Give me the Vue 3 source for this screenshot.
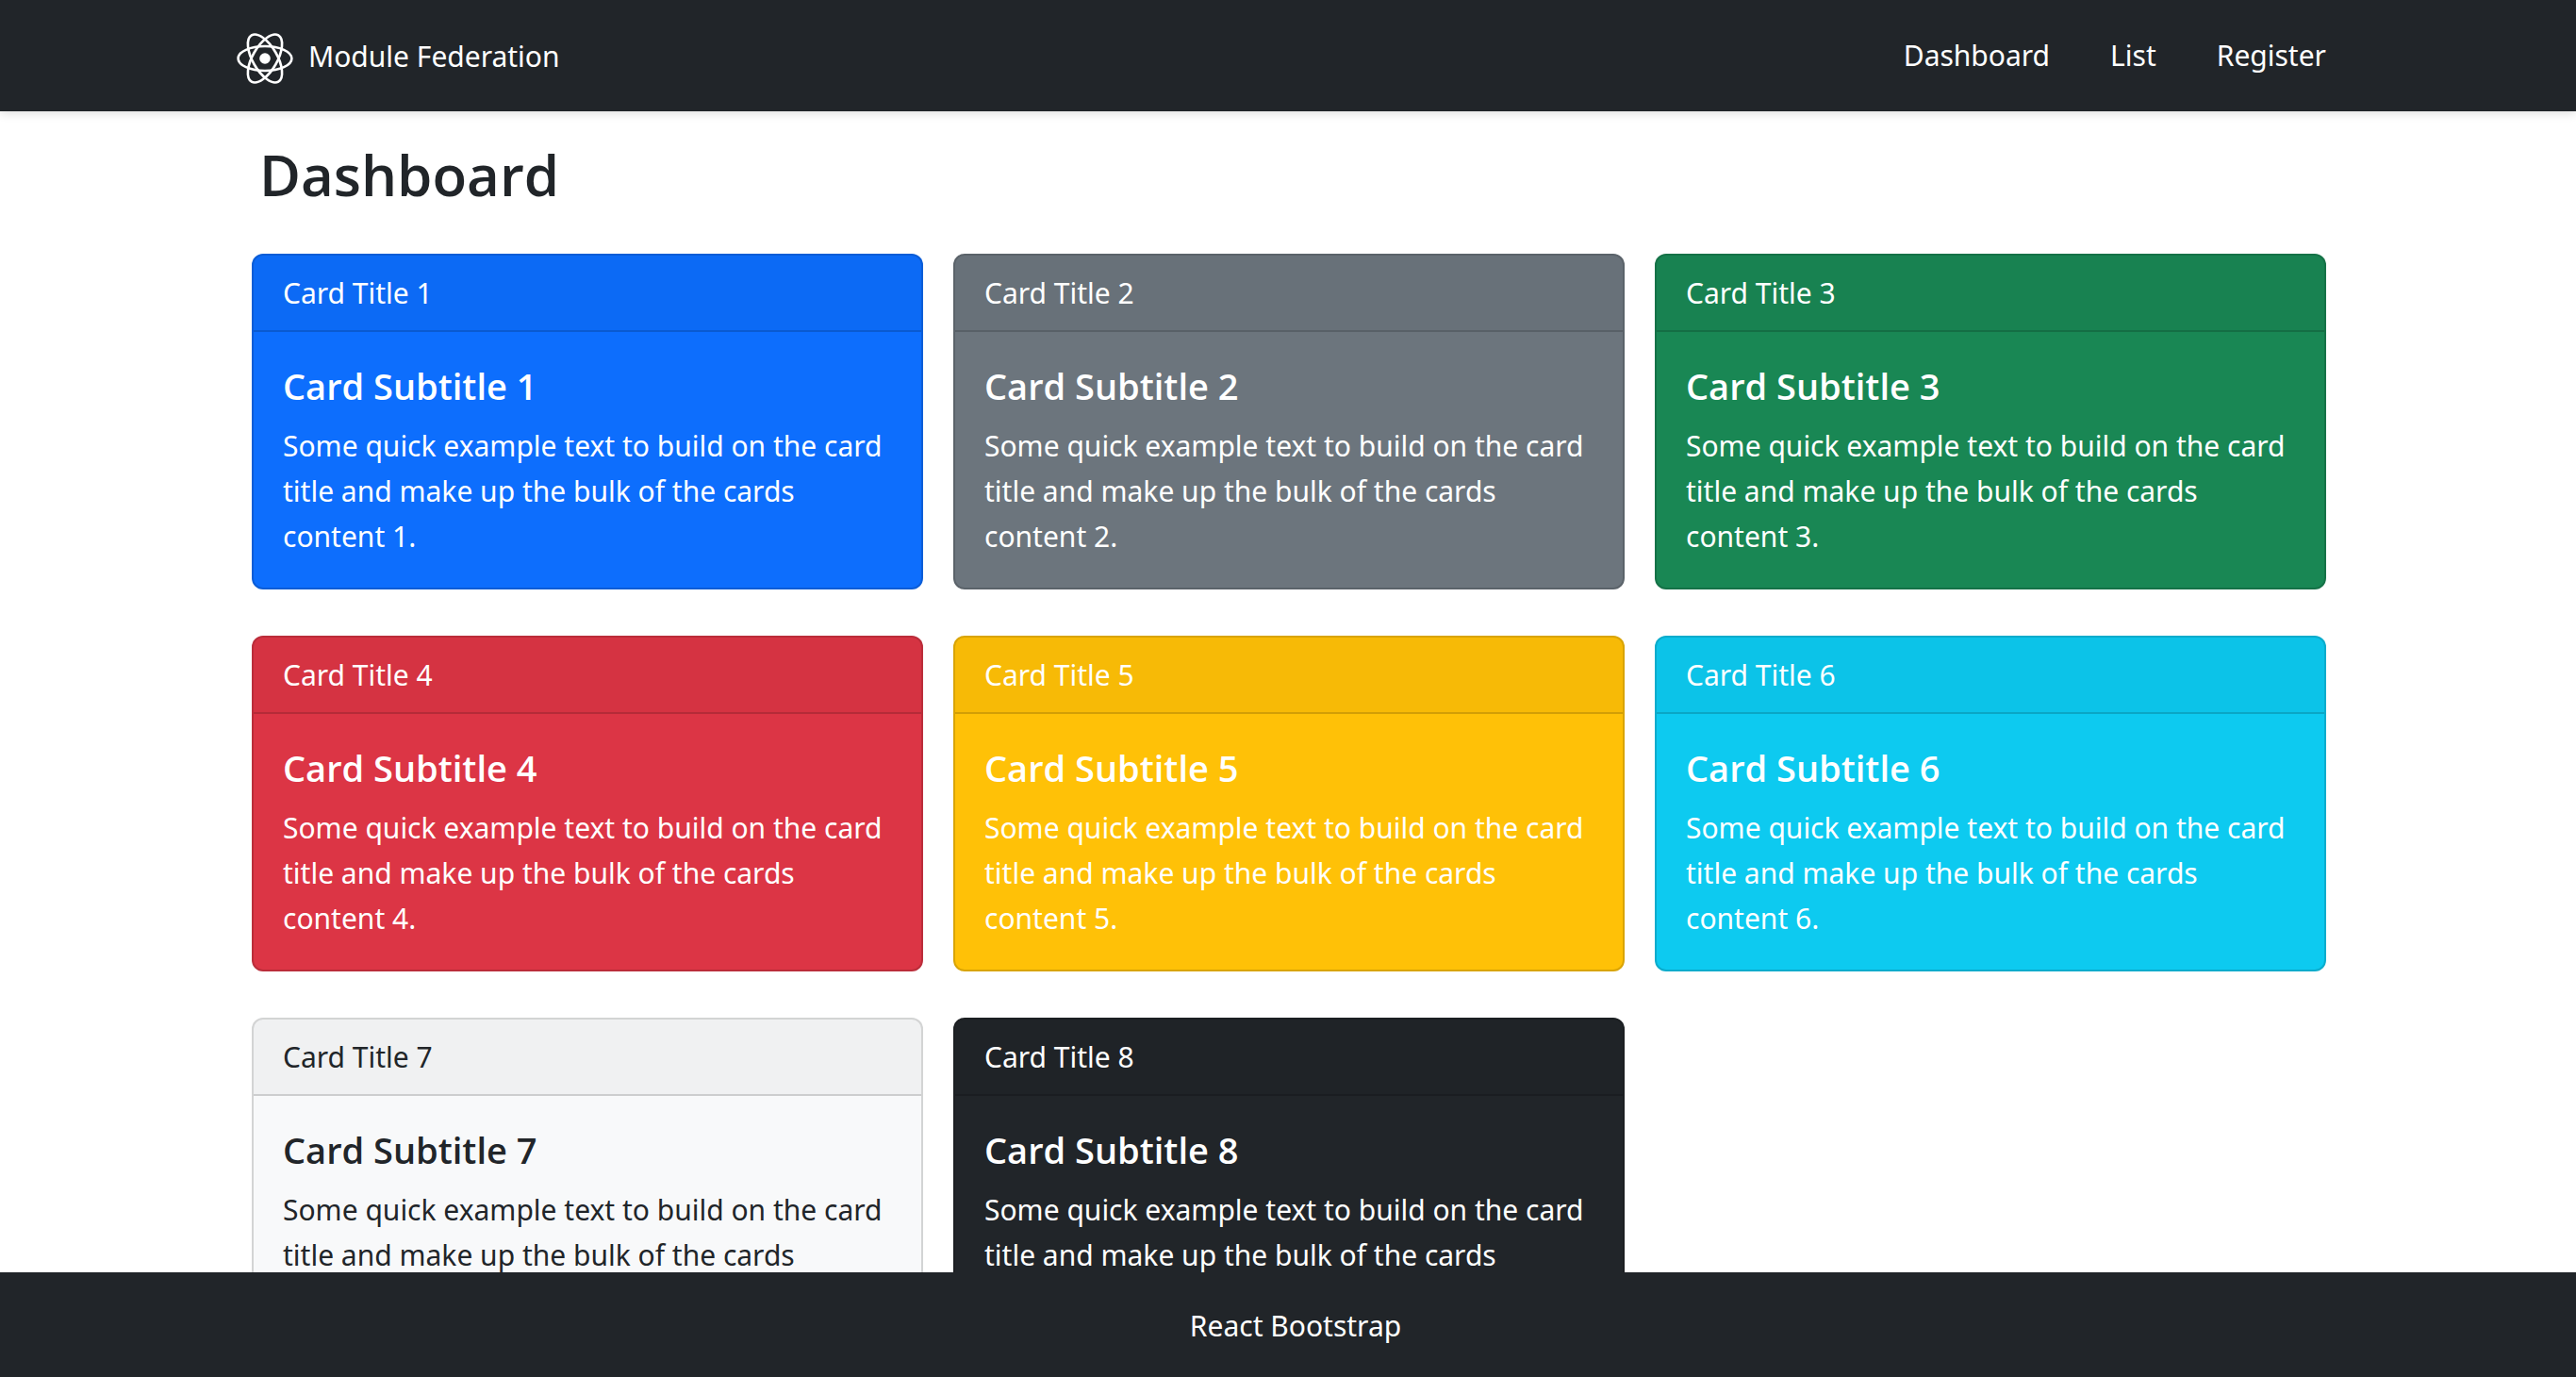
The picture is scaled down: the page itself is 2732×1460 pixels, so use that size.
<script setup>
const links = ['Dashboard', 'List', 'Register']

const variants = ['primary', 'secondary', 'success', 'danger', 'warning', 'info', 'light', 'dark']
const cards = variants.map((variant, i) => ({ variant, id: i + 1 }))
</script>

<template>
  <header class="navbar">
    <div class="nav-inner">
      <a class="brand" href="#">
        <svg class="logo" viewBox="0 0 60 60" aria-hidden="true">
          <g fill="none" stroke="#fff" stroke-width="2.6">
            <ellipse cx="30" cy="30" rx="28.4" ry="13" />
            <ellipse cx="30" cy="30" rx="28.4" ry="13" transform="rotate(60 30 30)" />
            <ellipse cx="30" cy="30" rx="28.4" ry="13" transform="rotate(120 30 30)" />
          </g>
          <circle cx="30" cy="30" r="5.8" fill="#fff" />
        </svg>
        <span class="brand-name">Module Federation</span>
      </a>
      <nav class="links">
        <a v-for="link in links" :key="link" href="#">{{ link }}</a>
      </nav>
    </div>
  </header>

  <main class="content">
    <h1>Dashboard</h1>
    <div class="grid">
      <article v-for="card in cards" :key="card.id" class="card" :class="card.variant">
        <div class="card-header">Card Title {{ card.id }}</div>
        <div class="card-body">
          <h2>Card Subtitle {{ card.id }}</h2>
          <p>Some quick example text to build on the card title and make up the bulk of the cards content {{ card.id }}.</p>
        </div>
      </article>
    </div>
  </main>

  <footer class="footer">React Bootstrap</footer>
</template>

<style>
body {
  background: #fff;
  color: #212529;
  font-family: "Segoe UI", "Noto Sans", "Open Sans", sans-serif;
  font-size: 30px;
  line-height: 48px;
}
</style>

<style scoped>
.navbar {
  background: #212529;
  box-shadow: 0 2px 10px rgba(0, 0, 0, 0.14);
}
.nav-inner {
  display: flex;
  align-items: center;
  justify-content: space-between;
  max-width: 2216px;
  height: 118px;
  margin: 0 auto;
  padding-right: 14px;
}
.brand {
  display: flex;
  align-items: center;
  gap: 16px;
  padding-top: 6px;
}
.brand-name {
  padding-bottom: 4px;
}
.brand,
.links a {
  color: #fff;
  text-decoration: none;
}
.logo {
  width: 60px;
  height: 60px;
}
.links {
  display: flex;
  gap: 64px;
}
.content {
  max-width: 2200px;
  margin: 0 auto;
  padding-left: 2px;
}
h1,
h2 {
  font-family: "Segoe UI", "Open Sans", "Noto Sans", sans-serif;
  font-weight: 600;
}
h1 {
  margin: 0;
  padding: 29px 8px 45px;
  font-size: 60px;
  line-height: 77px;
}
.grid {
  display: grid;
  grid-template-columns: repeat(3, 1fr);
  gap: 49px 32px;
}
.card {
  border: 2px solid rgba(0, 0, 0, 0.15);
  border-radius: 12px;
  color: #fff;
  overflow: hidden;
}
.card-header {
  padding: 16px 31px 15px;
  background: rgba(0, 0, 0, 0.03);
  border-bottom: 2px solid rgba(0, 0, 0, 0.15);
}
.card-body {
  padding: 33px 31px 30px;
}
h2 {
  margin: 0 0 16px;
  font-size: 38px;
  line-height: 48px;
}
p {
  margin: 0;
}
.primary { background: #0d6efd; }
.secondary { background: #6c757d; }
.success { background: #198754; }
.danger { background: #dc3545; }
.warning { background: #ffc107; }
.info { background: #0dcaf0; }
.light { background: #f8f9fa; color: #212529; }
.dark { background: #212529; }
.footer {
  position: fixed;
  inset: auto 0 0 0;
  padding: 33px 0 30px 16px;
  background: #212529;
  color: #fff;
  text-align: center;
}
</style>
